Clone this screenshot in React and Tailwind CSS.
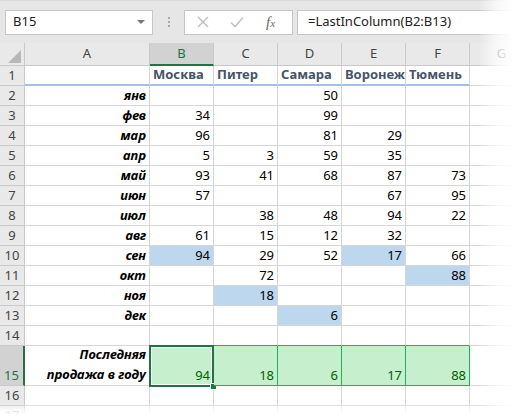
import React from "react";

const rows = [
  { n: 2, m: "янв", v: [null, null, 50, null, null] },
  { n: 3, m: "фев", v: [34, null, 99, null, null] },
  { n: 4, m: "мар", v: [96, null, 81, 29, null] },
  { n: 5, m: "апр", v: [5, 3, 59, 35, null] },
  { n: 6, m: "май", v: [93, 41, 68, 87, 73] },
  { n: 7, m: "июн", v: [57, null, null, 67, 95] },
  { n: 8, m: "июл", v: [null, 38, 48, 94, 22] },
  { n: 9, m: "авг", v: [61, 15, 12, 32, null] },
  { n: 10, m: "сен", v: [94, 29, 52, 17, 66] },
  { n: 11, m: "окт", v: [null, 72, null, null, 88] },
  { n: 12, m: "ноя", v: [null, 18, null, null, null] },
  { n: 13, m: "дек", v: [null, null, 6, null, null] },
];

const hl = { 10: [0, 3], 11: [4], 12: [1], 13: [2] };
const totals = [94, 18, 6, 17, 88];

function RowHead({ children, sel }) {
  return (
    <div
      className={
        sel
          ? "flex items-end justify-center border-b border-[#c9c9c9] border-r-2 border-r-[#217346] bg-[#d2d2d2] pb-[1px] text-[#217346] leading-[18px]"
          : "flex items-end justify-center border-b border-r border-[#c9c9c9] bg-[#e9e9e9] pb-[1px] text-[#444] leading-[18px]"
      }
    >
      {children}
    </div>
  );
}

function Cell({ children, className = "" }) {
  return (
    <div
      className={
        "flex items-end justify-end border-b border-r border-[#d6d6d6] px-[3px] pb-[1px] leading-[18px] " +
        className
      }
    >
      {children}
    </div>
  );
}

export default function App() {
  return (
    <div className="relative h-[416px] w-[514px] overflow-hidden bg-white font-['Noto_Sans',sans-serif] text-[13px] text-black">
      {/* Formula toolbar */}
      <div className="flex h-[43px] items-center border-t border-[#d8d8d8] bg-[#e6e6e6]">
        <div className="ml-[5px] flex h-[25px] w-[148px] items-center justify-between border border-[#c6c6c6] bg-white pl-[7px] pr-[7px] text-[13px] text-[#222]">
          <span>B15</span>
          <span className="h-0 w-0 border-l-[4px] border-r-[4px] border-t-[4px] border-l-transparent border-r-transparent border-t-[#777]" />
        </div>
        <div className="ml-[15px] flex flex-col gap-[2px]">
          <span className="h-[2px] w-[2px] bg-[#a8a8a8]" />
          <span className="h-[2px] w-[2px] bg-[#a8a8a8]" />
          <span className="h-[2px] w-[2px] bg-[#a8a8a8]" />
        </div>
        <div className="ml-[14px] flex h-[25px] w-[109px] items-center border border-[#c6c6c6] bg-white">
          <svg width="12" height="12" viewBox="0 0 12 12" className="ml-[12px]">
            <path d="M1 1 L11 11 M11 1 L1 11" stroke="#bdbdbd" strokeWidth="1.3" fill="none" />
          </svg>
          <svg width="14" height="12" viewBox="0 0 14 12" className="ml-[21px]">
            <path d="M1 6.5 L5 10.5 L13 1.5" stroke="#c4c4c4" strokeWidth="1.6" fill="none" />
          </svg>
          <span className="ml-[22px] font-['Liberation_Serif',serif] text-[15px] italic text-[#6a6a6a] leading-none">
            f<span className="text-[11px]">x</span>
          </span>
        </div>
        <div className="ml-[4px] flex h-[25px] flex-1 items-center border border-[#c6c6c6] bg-white pl-[10px] text-[13px] text-[#222]">
          =LastInColumn(B2:B13)
        </div>
      </div>

      {/* Sheet grid */}
      <div className="grid grid-cols-[25px_125px_64px_64px_64px_64px_64px_64px_1fr] grid-rows-[23px_repeat(14,20px)_40px_20px_20px]">
        {/* column headers */}
        <div className="relative border-b border-r border-[#c9c9c9] bg-[#e9e9e9]">
          <svg width="14" height="13" viewBox="0 0 14 13" className="absolute bottom-[2px] right-[2px]">
            <polygon points="13,0 13,13 0,13" fill="#b8b8b8" />
          </svg>
        </div>
        <div className="flex items-center justify-center border-b border-r border-[#c9c9c9] bg-[#e9e9e9] text-[#444]">A</div>
        <div className="flex items-center justify-center border-b-2 border-r border-b-[#217346] border-r-[#c9c9c9] bg-[#d2d2d2] text-[#217346]">B</div>
        {["C", "D", "E", "F", "G"].map((c) => (
          <div key={c} className="flex items-center justify-center border-b border-r border-[#c9c9c9] bg-[#e9e9e9] text-[#444]">
            {c}
          </div>
        ))}
        <div className="border-b border-[#c9c9c9] bg-[#e9e9e9]" />

        {/* row 1 */}
        <RowHead>1</RowHead>
        <div className="border-b-2 border-r border-b-[#a3c0e6] border-r-[#d6d6d6]" />
        {["Москва", "Питер", "Самара", "Воронеж", "Тюмень"].map((c) => (
          <div
            key={c}
            className="flex items-end border-b-2 border-r border-b-[#a3c0e6] border-r-[#d6d6d6] pl-[3px] pb-[1px] font-bold text-[#44546a] leading-[18px] whitespace-nowrap"
          >
            {c}
          </div>
        ))}
        <Cell />
        <div className="border-b border-[#d6d6d6]" />

        {rows.map((r) => (
          <React.Fragment key={r.n}>
            <RowHead>{r.n}</RowHead>
            <Cell className="font-bold italic">{r.m}</Cell>
            {r.v.map((v, i) => (
              <Cell key={i} className={hl[r.n] && hl[r.n].includes(i) ? "bg-[#bdd7ee]" : ""}>
                {v}
              </Cell>
            ))}
            <Cell />
            <div className="border-b border-[#d6d6d6]" />
          </React.Fragment>
        ))}

        {/* row 14 */}
        <RowHead>14</RowHead>
        <Cell />
        {[0, 1, 2, 3, 4].map((i) => (
          <div key={i} className="border-b border-r border-b-[#1faf55] border-r-[#d6d6d6]" />
        ))}
        <Cell />
        <div className="border-b border-[#d6d6d6]" />

        {/* row 15 */}
        <RowHead sel>15</RowHead>
        <div className="flex flex-col items-end justify-end border-b border-r border-b-[#d6d6d6] border-r-[#1faf55] px-[3px] pb-[1px] text-right font-bold italic leading-[20px]">
          <span>Последняя</span>
          <span>продажа в году</span>
        </div>
        {totals.map((v, i) => (
          <div
            key={i}
            className="relative flex items-end justify-end border-b border-r border-[#1faf55] bg-[#c6efce] px-[3px] pb-[1px] text-[#006100] leading-[18px]"
          >
            {v}
            {i === 0 && (
              <>
                <div className="absolute -bottom-[2px] -left-[1px] -right-[1px] -top-[1px] border-2 border-[#217346] shadow-[inset_0_0_0_1px_#ffffff]" />
                <div className="absolute -bottom-[5px] -right-[4px] h-[7px] w-[7px] border border-white bg-[#217346]" />
              </>
            )}
          </div>
        ))}
        <Cell />
        <div className="border-b border-[#d6d6d6]" />

        {/* rows 16-17 */}
        {[16, 17].map((n) => (
          <React.Fragment key={n}>
            <RowHead>{n}</RowHead>
            <Cell />
            <Cell />
            <Cell />
            <Cell />
            <Cell />
            <Cell />
            <Cell />
            <div className="border-b border-[#d6d6d6]" />
          </React.Fragment>
        ))}
      </div>

      {/* torn-edge fades */}
      <div className="pointer-events-none absolute right-0 top-0 h-full w-[36px] bg-gradient-to-r from-white/0 via-white/70 to-white" />
      <div className="pointer-events-none absolute bottom-0 left-0 h-[12px] w-full bg-gradient-to-b from-white/0 via-white/80 to-white" />
    </div>
  );
}
